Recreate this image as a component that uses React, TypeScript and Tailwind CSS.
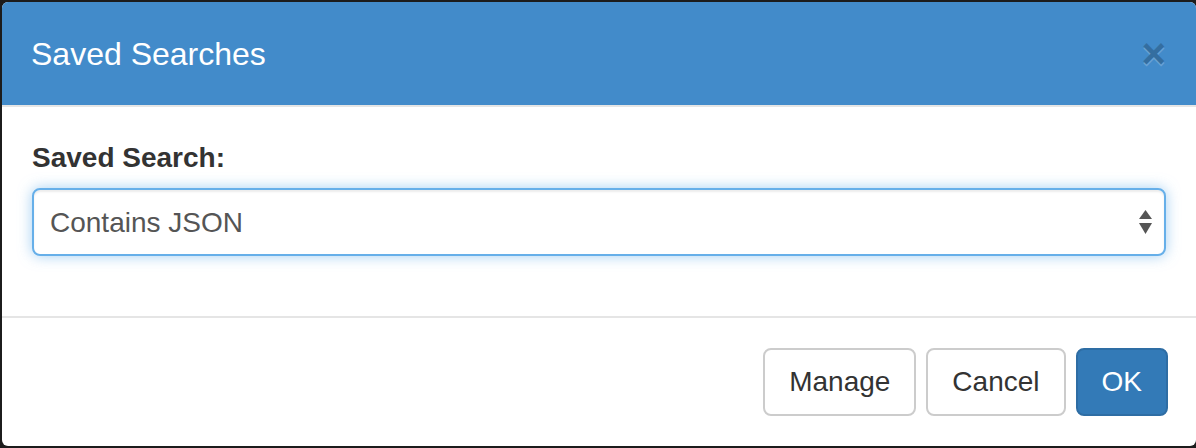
import React from "react";

const font = { fontFamily: '"Liberation Sans", Arial, sans-serif' };

function SelectArrows() {
  return (
    <svg width="13" height="24" viewBox="0 0 13 24" className="shrink-0">
      <polygon points="6.5,0 13,9 0,9" fill="#555" />
      <polygon points="0,13 13,13 6.5,24" fill="#555" />
    </svg>
  );
}

function Button({
  children,
  primary,
}: {
  children: React.ReactNode;
  primary?: boolean;
}) {
  return (
    <button
      className={
        primary
          ? "h-[68px] rounded-[8px] border-2 border-[#2e6da4] bg-[#337ab7] px-[24px] text-[28px] leading-[40px] text-white"
          : "h-[68px] rounded-[8px] border-2 border-[#ccc] bg-white px-[24px] text-[28px] leading-[40px] text-[#333]"
      }
    >
      {children}
    </button>
  );
}

export default function App() {
  return (
    <div className="h-[448px] w-[1196px] overflow-hidden bg-[#1c1c1c] pl-[2px] pt-[2px]" style={font}>
      <div className="flex h-[444px] w-[1194px] flex-col overflow-hidden rounded-[6px] bg-white">
        {/* header */}
        <div className="flex h-[105px] shrink-0 items-center justify-between border-b-2 border-[#e5e5e5] bg-[#428bca] pl-[29px] pr-[30px]">
          <h4 className="text-[32px] leading-[46px] text-white">Saved Searches</h4>
          <span
            className="text-[42px] font-bold leading-none text-black opacity-20"
            style={{ textShadow: "0 2px 0 #fff" }}
          >
            ×
          </span>
        </div>

        {/* body */}
        <div className="border-b-2 border-[#e5e5e5] px-[30px] pb-[30px] pt-[31px]">
          <div className="mb-[30px]">
            <label className="mb-[10px] block text-[28px] font-bold leading-[40px] text-[#333]">
              Saved Search:
            </label>
            <div className="flex h-[68px] items-center justify-between rounded-[8px] border-2 border-[#66afe9] bg-white pl-[16px] pr-[12px] shadow-[inset_0_2px_2px_rgba(0,0,0,0.075),0_0_14px_rgba(102,175,233,0.6)]">
              <span className="pt-[2px] text-[28px] text-[#555]">Contains JSON</span>
              <SelectArrows />
            </div>
          </div>
        </div>

        {/* footer */}
        <div className="flex justify-end gap-[10px] px-[28px] pt-[30px]">
          <Button>Manage</Button>
          <Button>Cancel</Button>
          <Button primary>OK</Button>
        </div>
      </div>
    </div>
  );
}
